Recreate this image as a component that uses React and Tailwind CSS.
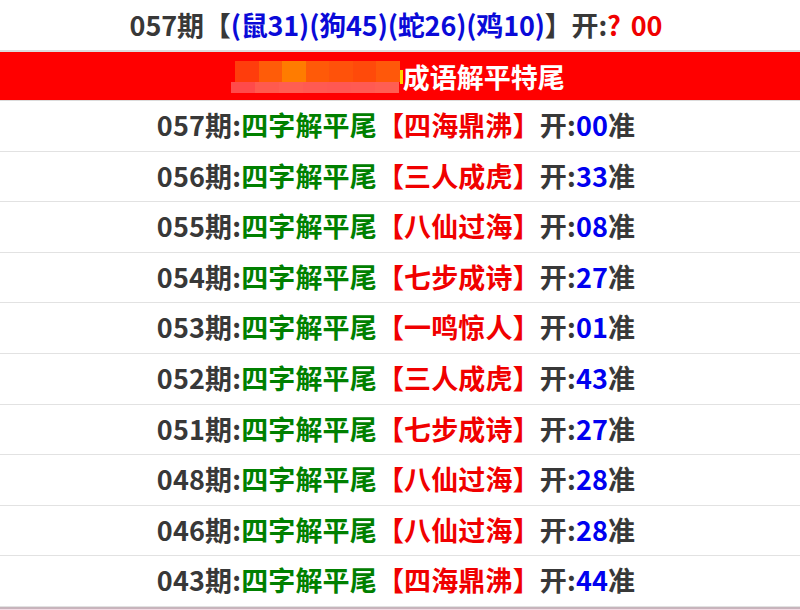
import React from 'react';

const rows = [
  { qi: '057', word: '四海鼎沸', num: '00' },
  { qi: '056', word: '三人成虎', num: '33' },
  { qi: '055', word: '八仙过海', num: '08' },
  { qi: '054', word: '七步成诗', num: '27' },
  { qi: '053', word: '一鸣惊人', num: '01' },
  { qi: '052', word: '三人成虎', num: '43' },
  { qi: '051', word: '七步成诗', num: '27' },
  { qi: '048', word: '八仙过海', num: '28' },
  { qi: '046', word: '八仙过海', num: '28' },
  { qi: '043', word: '四海鼎沸', num: '44' },
];

// pixelated (blurred) site name in the header
const mosaicTop = ['#ff3d0c', '#ff5c08', '#ff7c00', '#ff5a08', '#ff520a', '#ff4a0a', '#ff580a'];
const mosaicBottom = ['#ff4a4a', '#ff5a4e', '#ff5e52', '#ff5a52', '#ff5852', '#ff5a52', '#ff5e52'];

export default function App() {
  return (
    <div
      className="min-h-screen w-full bg-[#f5dbe5] font-bold"
      style={{ fontFamily: '"Noto Sans CJK SC", "Noto Sans", sans-serif' }}
    >
      <div className="bg-white">
        {/* current draw */}
        <div className="h-[52px] flex items-center justify-center pr-[8px] border-b-2 border-[#dcdcdc] text-[27px] text-[#383838] tracking-[-0.15px]">
          <span>057期【</span>
          <span className="text-[#0a0ad8]">(鼠31)(狗45)(蛇26)(鸡10)</span>
          <span>】开:</span>
          <span className="text-[#f00000]">?</span>
          <span className="text-[#f00000] ml-[10px]">00</span>
        </div>

        {/* header bar */}
        <div className="h-[49px] bg-[#ff0000] flex items-center justify-center pr-[4px] border-b border-[#dcdcdc]">
          <div className="flex flex-col mt-[1px]">
            <div className="flex ml-[4px]">
              {mosaicTop.map((c, i) => (
                <div key={i} className="w-[23.5px] h-[21px]" style={{ background: c }} />
              ))}
            </div>
            <div className="flex">
              {mosaicBottom.map((c, i) => (
                <div key={i} className="w-[24px] h-[11px]" style={{ background: c }} />
              ))}
            </div>
          </div>
          <div className="w-[3px] h-[14px] bg-[#ffd400] mt-[2px]" />
          <span className="text-[27px] text-white leading-none">成语解平特尾</span>
        </div>

        {rows.map((r) => (
          <div
            key={r.qi}
            className="h-[50.6px] flex items-center justify-center pr-[8px] pb-[1px] border-b border-[#e2e2e2] text-[27px] text-[#383838] tracking-[0.15px]"
          >
            <span>{r.qi}期:</span>
            <span className="text-[#008000]">四字解平尾</span>
            <span className="text-[#f00000]">【{r.word}】</span>
            <span>开:</span>
            <span className="text-[#0000f0]">{r.num}</span>
            <span>准</span>
          </div>
        ))}
      </div>
      <div className="h-[2px] bg-[#c8b4bc]" />
    </div>
  );
}
